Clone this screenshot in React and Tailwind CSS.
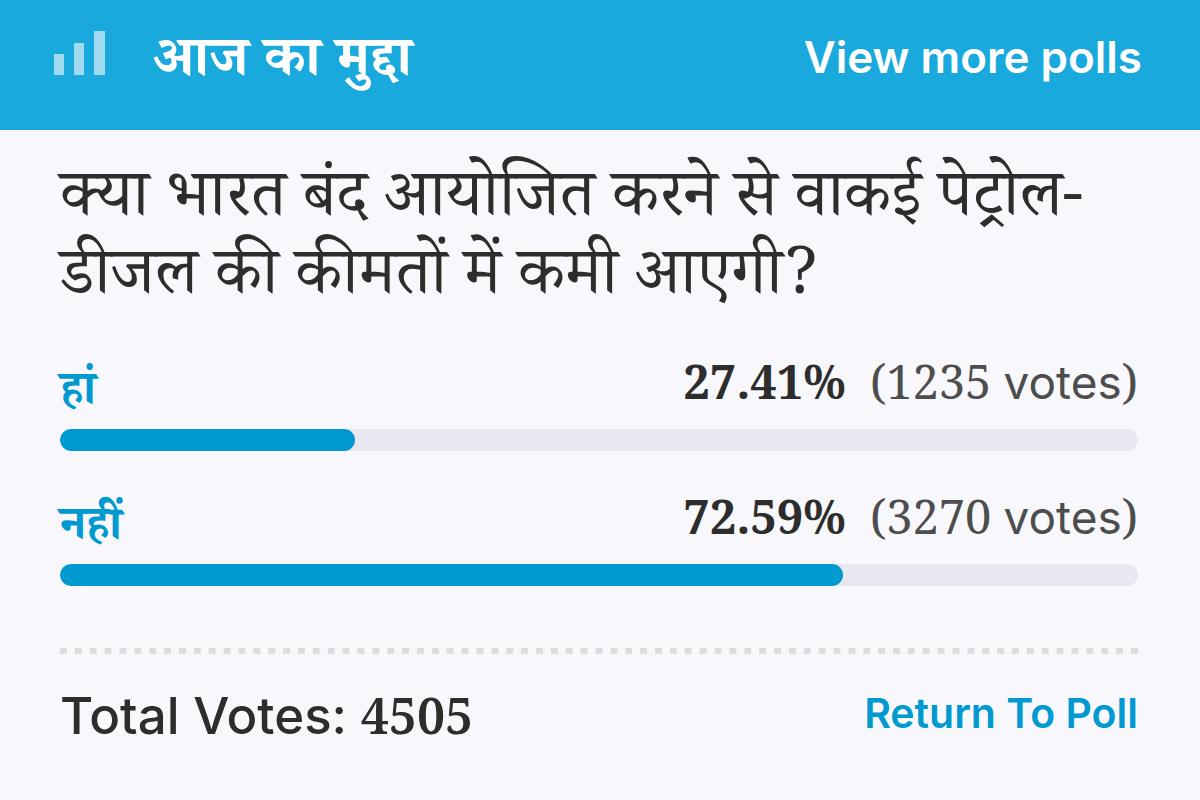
const options = [
  { id: 'yes', label: 'हां', percent: 27.41, votes: 1235 },
  { id: 'no', label: 'नहीं', percent: 72.59, votes: 3270 },
];

function Option({ option }) {
  return (
    <li>
      <div className="flex h-[60px] items-center justify-between">
        <span id={option.id} className="pt-7 font-['Noto_Serif_Devanagari','Noto_Sans_Devanagari','Noto_Sans',sans-serif] text-[47px] font-bold leading-[60px] text-[#0099d0]">{option.label}</span>
        <span className="flex items-baseline gap-6 pb-1 font-['Noto_Serif','DejaVu_Serif',serif] text-[47px] leading-[60px] text-[#4d4d4d]">
          <strong className="text-[#2d2d2d]">{option.percent}%</strong>
          <span>({option.votes} <span className="font-[Inter,sans-serif] text-[46px]">votes</span>)</span>
        </span>
      </div>
      <div role="progressbar" aria-labelledby={option.id} aria-valuenow={option.percent} className="mt-4 h-[22px] overflow-hidden rounded-full bg-[#e8e8f1]">
        <div className="h-full rounded-full bg-[#0099d0]" style={{ width: `${option.percent}%` }} />
      </div>
    </li>
  );
}

export default function App() {
  return (
    <main className="min-h-screen bg-[#f8f8fc] text-[#2d2d2d]">
      <header className="flex h-[130px] items-center justify-between bg-[#19a9dd] pb-3 pl-[54px] pr-[58px] text-white">
        <div className="flex items-center gap-12">
          <svg className="mb-3 h-11 w-[51px]" viewBox="0 0 51 44" fill="#a0dbf1" aria-hidden="true">
            <path d="M0 23h10v21H0zM20 12h10v32H20zM40 0h11v44H40z" />
          </svg>
          <h1 className="pt-4 font-['Noto_Serif_Devanagari','Noto_Sans_Devanagari','Noto_Sans',sans-serif] text-[56px] font-bold leading-[78px]">आज का मुद्दा</h1>
        </div>
        <a href="#polls" className="pb-1 font-[Inter,sans-serif] text-[44px] font-semibold">View more polls</a>
      </header>
      <section className="pl-[60px] pr-[62px] pt-9">
        <h2 className="font-['Noto_Serif_Devanagari','Noto_Sans_Devanagari','Noto_Sans',sans-serif] text-[66px] leading-[78px]">क्या भारत बंद आयोजित करने से वाकई पेट्रोल-डीजल की कीमतों में कमी आएगी?</h2>
        <ul className="mt-[31px] flex flex-col gap-[37px]">
          {options.map((option) => <Option key={option.id} option={option} />)}
        </ul>
        <div aria-hidden="true" className="-mr-2 mt-[62px] h-[6px] bg-[linear-gradient(90deg,#dddddd_50%,transparent_50%)] bg-[size:calc(100%/73)_6px]" />
        <footer className="flex items-center justify-between pt-7">
          <p className="font-[Inter,sans-serif] text-[51px] font-medium leading-[66px]">Total Votes: <span className="font-['Noto_Serif','DejaVu_Serif',serif] text-[50px] font-semibold">4505</span></p>
          <a href="#poll" className="pb-1 font-[Inter,sans-serif] text-[41px] font-semibold text-[#0099d0]">Return To Poll</a>
        </footer>
      </section>
    </main>
  );
}
